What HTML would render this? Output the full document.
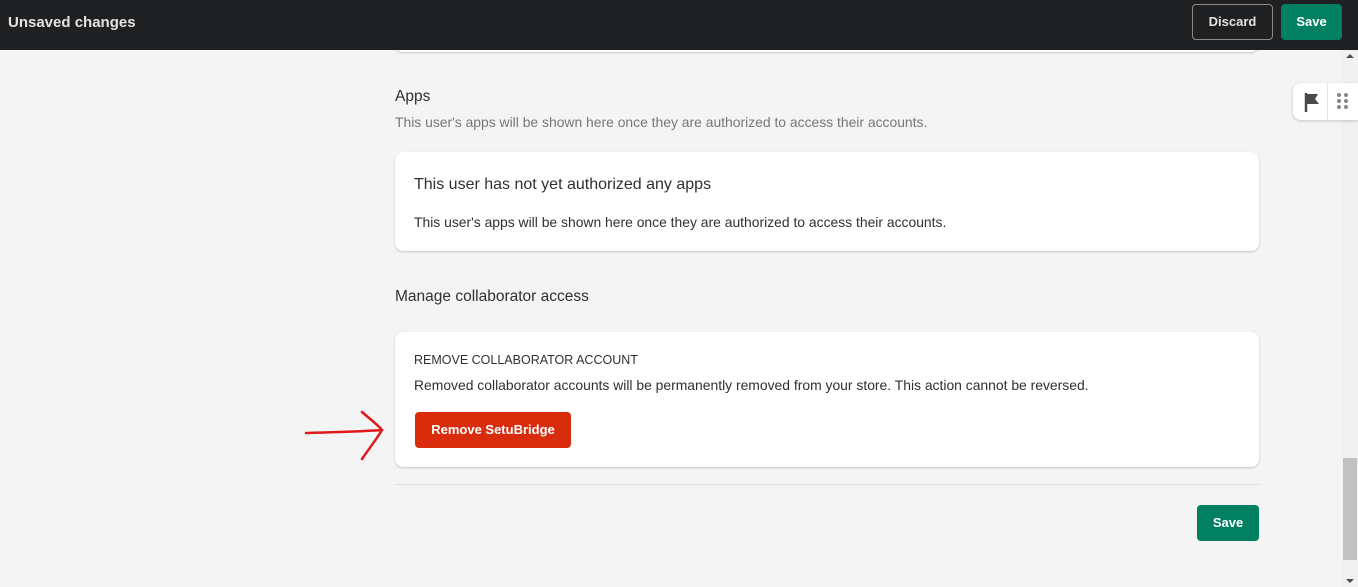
<!DOCTYPE html>
<html><head><style>
*{box-sizing:border-box;margin:0;padding:0}
body{width:1358px;height:587px;overflow:hidden;background:#f4f4f4;font-family:"Liberation Sans",sans-serif;position:relative;color:#303030}
.top{position:absolute;left:0;top:0;width:1358px;height:50px;background:#1f2021}
.top .t{position:absolute;left:8px;top:14px;color:#e3e3e3;font-weight:bold;font-size:15px}
.btn{position:absolute;border-radius:4px;font-weight:bold;font-size:13px;text-align:center}
.card{position:absolute;left:395px;width:864px;background:#fff;border-radius:8px;box-shadow:0 1px 2px rgba(0,0,0,.2)}
.abs{position:absolute;white-space:nowrap}
</style></head><body>
<div class="card" style="top:20px;height:32px"></div>
<div class="top"><div class="t">Unsaved changes</div>
<div class="btn" style="left:1192px;top:4px;width:81px;height:36px;border:1px solid #8a8a8a;color:#e3e3e3;line-height:34px">Discard</div>
<div class="btn" style="left:1281px;top:4px;width:61px;height:36px;background:#008060;color:#fff;line-height:36px">Save</div>
</div>
<div class="abs" style="left:395px;top:88px;font-size:15.5px">Apps</div>
<div class="abs" style="left:395px;top:114px;font-size:13.9px;color:#777">This user's apps will be shown here once they are authorized to access their accounts.</div>
<div class="card" style="top:152px;height:99px">
<div class="abs" style="left:19px;top:24px;font-size:16px">This user has not yet authorized any apps</div>
<div class="abs" style="left:19px;top:62px;font-size:13.9px">This user's apps will be shown here once they are authorized to access their accounts.</div>
</div>
<div class="abs" style="left:395px;top:288px;font-size:15.5px">Manage collaborator access</div>
<div class="card" style="top:332px;height:135px">
<div class="abs" style="left:19px;top:21px;font-size:12.5px">REMOVE COLLABORATOR ACCOUNT</div>
<div class="abs" style="left:19px;top:45px;font-size:13.9px">Removed collaborator accounts will be permanently removed from your store. This action cannot be reversed.</div>
<div class="btn" style="left:20px;top:80px;width:156px;height:36px;background:#d82c0d;color:#fff;line-height:36px">Remove SetuBridge</div>
</div>
<svg class="abs" style="left:300px;top:405px" width="90" height="60"><path d="M6 28 C30 27 55 27 82 25 M62 7 C70 14 78 20 82 25 C76 35 68 45 62 54" stroke="#e0191c" stroke-width="2.5" fill="none" stroke-linecap="round"/></svg>
<div class="abs" style="left:395px;top:484px;width:864px;height:1px;background:#ddd"></div>
<div class="btn" style="left:1197px;top:505px;width:62px;height:36px;background:#008060;color:#fff;line-height:36px">Save</div>
<div class="abs" style="left:1342px;top:50px;width:16px;height:537px;background:#f1f1f1"></div>
<div class="abs" style="left:1343px;top:458px;width:14px;height:102px;background:#c1c1c1"></div>
<div class="abs" style="left:1346px;top:54px;width:0;height:0;border-left:4px solid transparent;border-right:4px solid transparent;border-bottom:4px solid #505050"></div>
<div class="abs" style="left:1346px;top:579px;width:0;height:0;border-left:4px solid transparent;border-right:4px solid transparent;border-top:4px solid #505050"></div>
<div class="abs" style="left:1293px;top:83px;width:65px;height:37px;background:#fff;border-radius:8px 0 0 8px;box-shadow:0 1px 3px rgba(0,0,0,.2)">
<svg class="abs" style="left:10px;top:8px" width="20" height="22"><path d="M3 2V21" stroke="#4a4a4a" stroke-width="2.5"/><path d="M4 3H15L12 8L16 13H4Z" fill="#4a4a4a"/></svg>
<div class="abs" style="left:34px;top:0;width:1px;height:37px;background:#e3e3e3"></div>
<svg class="abs" style="left:44px;top:10px" width="12" height="18"><g fill="#888"><circle cx="2" cy="2" r="2"/><circle cx="9" cy="2" r="2"/><circle cx="2" cy="8" r="2"/><circle cx="9" cy="8" r="2"/><circle cx="2" cy="14" r="2"/><circle cx="9" cy="14" r="2"/></g></svg>
</div>
</body></html>
